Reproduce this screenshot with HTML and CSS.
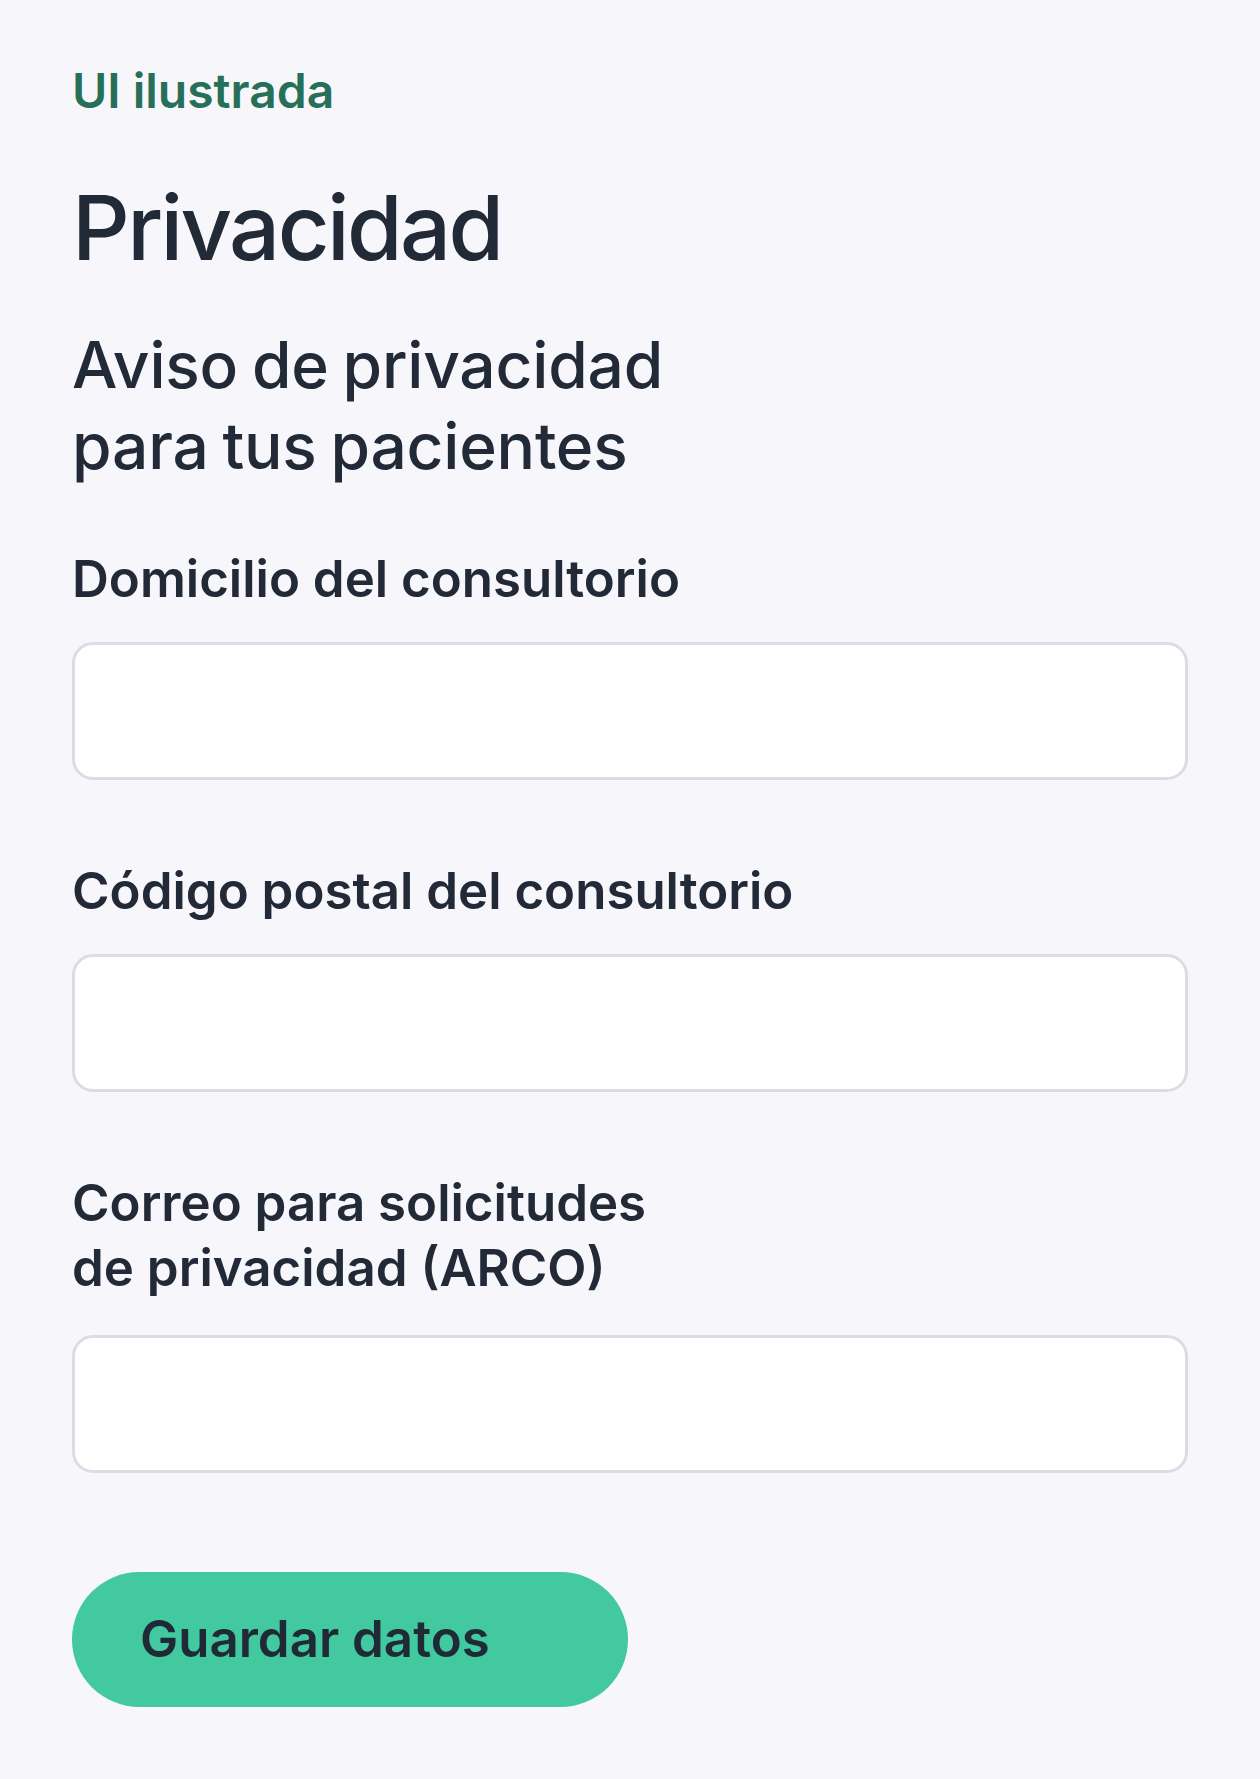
FILE: index.html
```html
<!DOCTYPE html>
<html lang="es">
<head>
<meta charset="utf-8">
<title>Privacidad</title>
<link rel="stylesheet" href="styles.css">
</head>
<body>
<main class="page">
  <p class="eyebrow">UI ilustrada</p>
  <h1 class="title">Privacidad</h1>
  <h2 class="subtitle">Aviso de privacidad<br>para tus pacientes</h2>
  <form class="form">
    <div class="field">
      <label class="label" for="domicilio">Domicilio del consultorio</label>
      <input class="input" id="domicilio" type="text">
    </div>
    <div class="field">
      <label class="label" for="cp">Código postal del consultorio</label>
      <input class="input" id="cp" type="text">
    </div>
    <div class="field">
      <label class="label label--tall" for="correo">Correo para solicitudes<br>de privacidad (ARCO)</label>
      <input class="input" id="correo" type="email">
    </div>
    <button class="button" type="button">Guardar datos</button>
  </form>
</main>
</body>
</html>
```
FILE: styles.css
```css
* { box-sizing: border-box; }
html, body {
  margin: 0;
  background: #f6f6fb;
}
body {
  font-family: Inter, "Liberation Sans", sans-serif;
  color: #222a38;
}
.page {
  padding: 62px 72px 60px;
  display: flex;
  flex-direction: column;
}
.eyebrow {
  margin: 0;
  font-size: 48px;
  line-height: 58px;
  font-weight: 600;
  color: #26705a;
}
.title {
  margin: 54px 0 0;
  font-size: 90px;
  line-height: 108px;
  font-weight: 500;
  letter-spacing: -2.6px;
}
.subtitle {
  margin: 42px 0 0;
  font-size: 64px;
  line-height: 81px;
  font-weight: 500;
  letter-spacing: -0.2px;
  word-spacing: -3px;
}
.form {
  margin-top: 60px;
  display: flex;
  flex-direction: column;
}
.field {
  display: flex;
  flex-direction: column;
  margin-bottom: 78px;
}
.field:last-of-type { margin-bottom: 99px; }
.label {
  font-size: 51px;
  line-height: 65px;
  font-weight: 600;
  margin-bottom: 31px;
}
.label--tall { margin-bottom: 35px; }
.input {
  width: 100%;
  height: 138px;
  background: #ffffff;
  border: 3px solid #dcdde4;
  border-radius: 21px;
  font: inherit;
  font-size: 48px;
  padding: 0 36px;
  outline: none;
}
.button {
  align-self: flex-start;
  width: 556px;
  height: 135px;
  border: none;
  border-radius: 999px;
  background: #43c9a0;
  color: #1f2a36;
  font-family: Inter, "Liberation Sans", sans-serif;
  font-size: 51px;
  line-height: 62px;
  font-weight: 600;
  text-align: left;
  padding: 0 0 2px 68px;
  cursor: pointer;
}
```
